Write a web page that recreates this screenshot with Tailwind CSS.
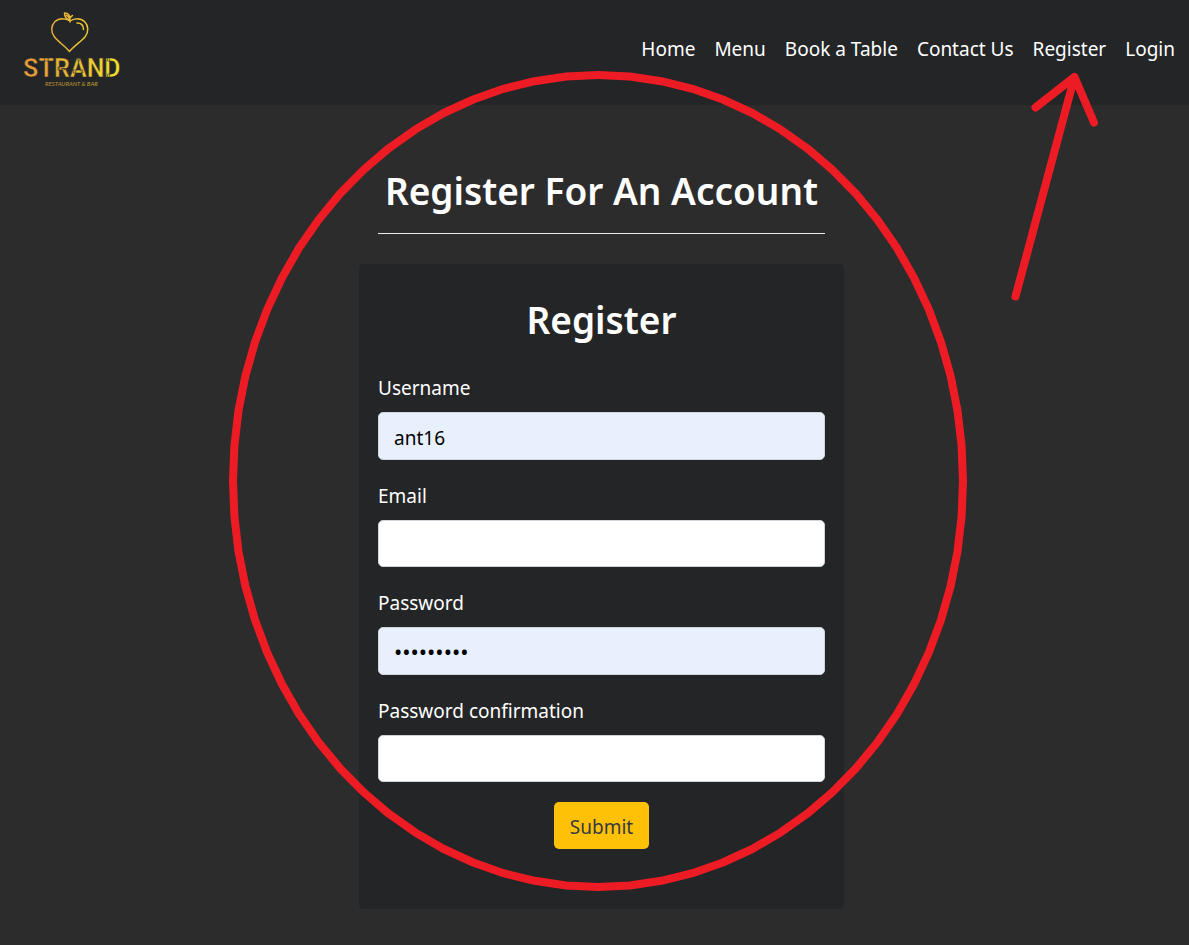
<!DOCTYPE html>
<html lang="en">
<head>
<meta charset="utf-8">
<title>Strand Restaurant &amp; Bar - Register</title>
<script src="https://cdn.jsdelivr.net/npm/@tailwindcss/browser@4"></script>
</head>
<body class="relative flex min-h-screen flex-col overflow-x-hidden border-b border-[#242527] bg-[#2c2c2c] font-['Segoe_UI','Noto_Sans',sans-serif] text-[19px] text-white">
<header class="flex h-[105px] items-center justify-between bg-[#242527] pr-[14px] pl-5">
  <a href="#" aria-label="Strand home" class="block pb-2">
    <svg width="100" height="84" viewBox="20 7 100 84" fill="none">
      <defs>
        <linearGradient id="gold" gradientUnits="userSpaceOnUse" x1="22" y1="0" x2="118" y2="0">
          <stop offset="0" stop-color="#e8963a"/><stop offset=".5" stop-color="#e6b936"/><stop offset="1" stop-color="#eee32c"/>
        </linearGradient>
      </defs>
      <g stroke="url(#gold)" stroke-width="1.5" stroke-linejoin="round" stroke-linecap="round">
        <path d="M70 21C66 18 59 17.500 55 21.500C51 25.500 50.500 32 54.500 37C58 41.500 65 46 69.500 51.500C74 46 81 41.500 85 37C89 32 88.500 25.500 84.500 21.500C80.500 17.500 74 18 70 21Z"/>
        <path d="M70 22C70 18 68 16 66.500 15.500M70 20C67 19.500 64.500 17 64.500 13C68.500 13 70.500 16 70 20ZM70 18C71 16.500 72 16 72.500 15.500"/>
        <path d="M77 23C81 23 83.500 25.500 83.500 29.500"/>
      </g>
      <text x="23" y="77" font-family="'Liberation Sans Narrow', Roboto, sans-serif" font-weight="700" font-size="25" fill="url(#gold)" stroke="#242527" stroke-width=".6">STRAND</text>
      <text x="45" y="86" font-family="Lato, sans-serif" font-style="italic" font-size="6" fill="url(#gold)" opacity=".75">RESTAURANT &amp; BAR</text>
    </svg>
  </a>
  <nav class="flex gap-[19px] pb-2 text-[19px] leading-7">
    <a href="#">Home</a>
    <a href="#">Menu</a>
    <a href="#">Book a Table</a>
    <a href="#">Contact Us</a>
    <a href="#">Register</a>
    <a href="#">Login</a>
  </nav>
</header>
<main class="flex flex-col items-center pt-[62px] pb-9 pl-[14px]">
  <h1 class="w-full max-w-[447px] border-b border-[#e9e9e9] pb-[18px] text-center text-[37px] leading-[48px] font-semibold whitespace-nowrap">Register For An Account</h1>
  <form class="mt-[30px] flex w-full max-w-[485px] flex-col gap-5 rounded-[5px] bg-[#242527] px-[19px] pt-8 pb-[60px]">
    <h2 class="mb-[10px] text-center text-[37px] leading-[48px] font-semibold">Register</h2>
    <div class="flex flex-col gap-[10px] pb-0.5">
      <label for="username" class="leading-7">Username</label>
      <input id="username" type="text" value="ant16" class="h-12 w-full rounded-[5px] border border-[#ced4da] bg-[#e8f0fe] px-[15px] pt-1 text-black">
    </div>
    <div class="flex flex-col gap-[10px] pb-0.5">
      <label for="email" class="leading-7">Email</label>
      <input id="email" type="email" class="h-[47px] w-full rounded-[5px] border border-[#ced4da] bg-white px-[15px] text-black">
    </div>
    <div class="flex flex-col gap-[10px] pb-0.5">
      <label for="password" class="leading-7">Password</label>
      <input id="password" type="password" value="password1" class="h-12 w-full rounded-[5px] border border-[#ced4da] bg-[#e8f0fe] px-[15px] text-[22px] text-black">
    </div>
    <div class="flex flex-col gap-[10px]">
      <label for="confirm" class="leading-7">Password confirmation</label>
      <input id="confirm" type="password" class="h-[47px] w-full rounded-[5px] border border-[#ced4da] bg-white px-[15px] text-black">
    </div>
    <button type="submit" class="h-[47px] self-center rounded-[5px] bg-[#ffc107] px-4 pt-1 text-[#343a40]">Submit</button>
  </form>
</main>
<svg class="pointer-events-none absolute top-0 left-0" width="1189" height="945" viewBox="0 0 1189 945" fill="none" stroke="#ed1c24" stroke-width="8" stroke-linecap="round" stroke-linejoin="round" aria-hidden="true">
  <defs>
    <polyline id="arc" points="0,406 31.8,404.5 63.4,399.8 94.5,392.2 124.8,381.5 154.3,368 182.5,351.6 209.4,332.6 234.6,311 258.1,287.1 279.6,261 299,232.9 316.1,203 330.8,171.6 343,138.9 352.6,105.1 359.5,70.5 363.6,35.4 365,0"/>
  </defs>
  <g transform="translate(598 481)">
    <use href="#arc"/>
    <use href="#arc" transform="scale(-1 1)"/>
    <use href="#arc" transform="scale(1 -1)"/>
    <use href="#arc" transform="scale(-1 -1)"/>
  </g>
  <path d="M1015.500 296.500L1074.500 77M1035.500 107.500L1074.500 77L1094 122.500"/>
</svg>
</body>
</html>
